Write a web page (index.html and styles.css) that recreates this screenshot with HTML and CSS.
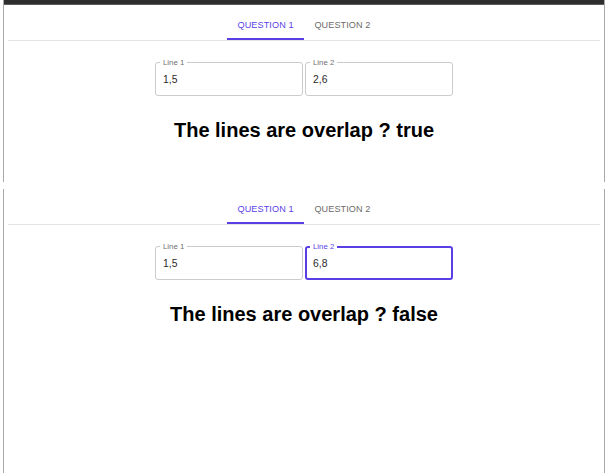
FILE: index.html
```html
<!DOCTYPE html>
<html lang="en">
<head>
<meta charset="utf-8">
<title>Overlap</title>
<link rel="stylesheet" href="styles.css">
</head>
<body>
<div class="page">
  <section class="panel panel--first">
    <div class="topbar"></div>
    <div class="panel-body">
      <div class="tabs">
        <div class="tablist">
          <button class="tab tab--active">Question 1</button>
          <button class="tab">Question 2</button>
        </div>
      </div>
      <div class="fields">
        <div class="field">
          <span class="field-label">Line 1</span>
          <span class="field-value">1,5</span>
        </div>
        <div class="field">
          <span class="field-label">Line 2</span>
          <span class="field-value">2,6</span>
        </div>
      </div>
      <h2 class="result">The lines are overlap ? true</h2>
    </div>
  </section>

  <section class="panel panel--second">
    <div class="panel-body">
      <div class="tabs">
        <div class="tablist">
          <button class="tab tab--active">Question 1</button>
          <button class="tab">Question 2</button>
        </div>
      </div>
      <div class="fields">
        <div class="field">
          <span class="field-label">Line 1</span>
          <span class="field-value">1,5</span>
        </div>
        <div class="field field--focused">
          <span class="field-label">Line 2</span>
          <span class="field-value">6,8</span>
        </div>
      </div>
      <h2 class="result">The lines are overlap ? false</h2>
    </div>
  </section>
</div>
</body>
</html>
```

FILE: styles.css
```css
* { box-sizing: border-box; }

html, body {
  margin: 0;
  padding: 0;
  background: #ffffff;
  font-family: "Liberation Sans", Arial, sans-serif;
  overflow: hidden;
}

.page {
  padding: 0 1px 0 3px;
}

.panel {
  border-left: 1px solid #a8a8a8;
  border-right: 1px solid #a8a8a8;
  background: #fff;
}

.panel--first {
  height: 182px;
  overflow: hidden;
}

.panel--second {
  margin-top: 7px;
  height: 300px;
}

.topbar {
  height: 5px;
  margin: 0 -1px;
  background: #2e2e2e;
  border-bottom: 1px solid #5c5c5c;
}

.panel-body {
  padding: 4px 4px 0;
}

.tabs {
  border-bottom: 1px solid #e4e4e4;
}

.tablist {
  display: flex;
  justify-content: center;
}

.tab {
  height: 31px;
  min-width: 58px;
  padding: 2px 10.4px 0;
  border: 0;
  border-bottom: 2px solid transparent;
  background: none;
  font-family: "Liberation Sans", Arial, sans-serif;
  font-size: 9.1px;
  font-weight: 400;
  letter-spacing: 0.1px;
  text-transform: uppercase;
  color: #6b6b6b;
  cursor: pointer;
}

.tab--active {
  color: #5b3fe6;
  border-bottom-color: #5b3fe6;
}

.fields {
  display: flex;
  justify-content: center;
  gap: 2px;
  margin-top: 21px;
}

.field {
  position: relative;
  width: 148px;
  height: 34px;
  border: 1px solid #cbcbcb;
  border-radius: 3px;
  padding: 0 7px;
  display: flex;
  align-items: center;
}

.field--focused {
  border: 2px solid #5b3fe6;
  padding: 0 6px;
}

.field-label {
  position: absolute;
  top: -5px;
  left: 4px;
  padding: 0 3px;
  background: #fff;
  font-size: 7.8px;
  line-height: 9px;
  color: #707070;
}

.field--focused .field-label {
  top: -6px;
  left: 3px;
  color: #5b3fe6;
}

.field-value {
  font-size: 10.4px;
  color: #2a2a2a;
}

.result {
  margin: 23px 0 0;
  font-size: 20px;
  line-height: 23px;
  font-weight: 700;
  text-align: center;
  color: #000;
}
```
